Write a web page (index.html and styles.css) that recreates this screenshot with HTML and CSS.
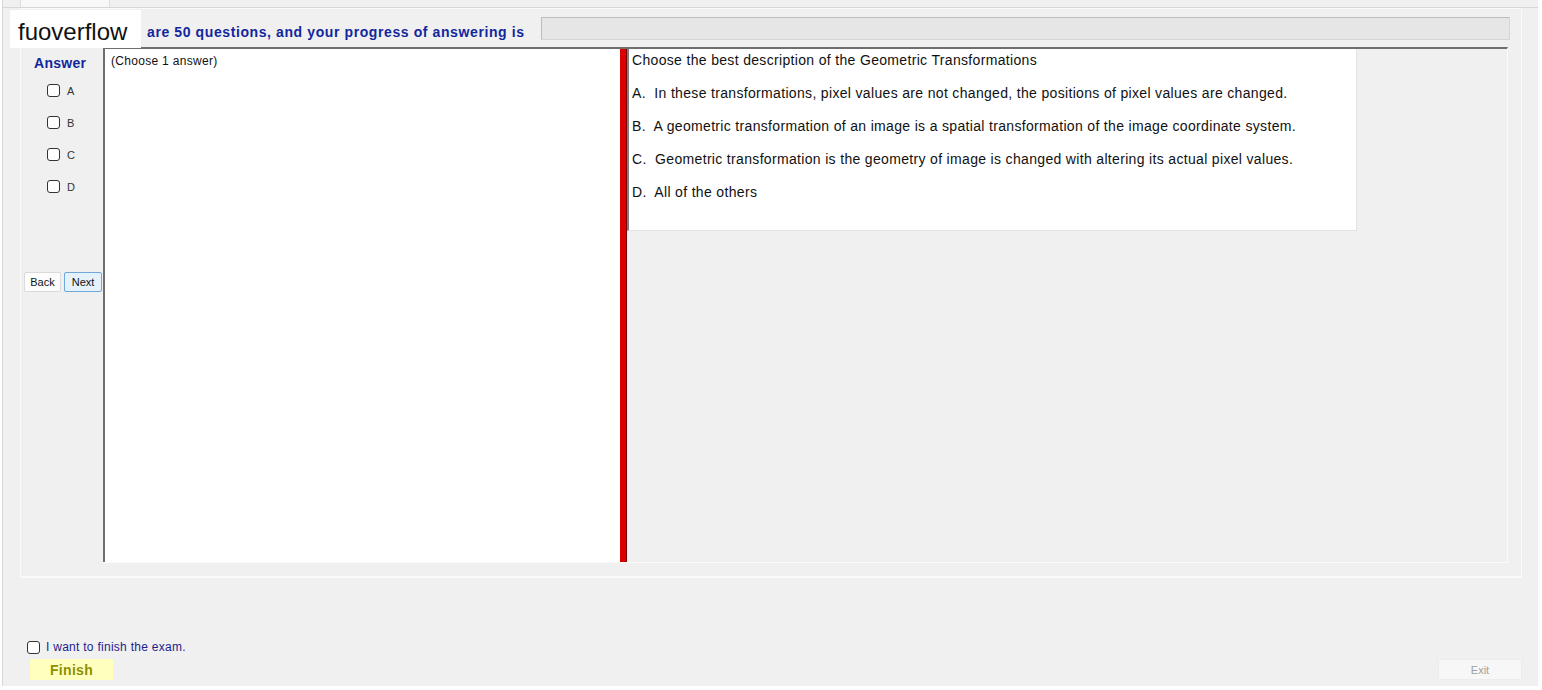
FILE: index.html
```html
<!DOCTYPE html>
<html lang="en">
<head>
  <meta charset="UTF-8">
  <title>Exam</title>
  <link rel="stylesheet" href="styles.css">
</head>
<body>
  <div class="window">
    <div class="tabs"><span class="tab"></span></div>
    <div class="page">
      <div class="group">
        <div class="header">
          <p class="progress-label">are 50 questions, and your progress of answering is</p>
          <div class="progress"></div>
        </div>
        <div class="main">
          <aside class="answers">
            <h2 class="answers-title">Answer</h2>
            <label class="option"><input type="checkbox"> A</label>
            <label class="option"><input type="checkbox"> B</label>
            <label class="option"><input type="checkbox"> C</label>
            <label class="option"><input type="checkbox"> D</label>
            <div class="nav">
              <button class="btn">Back</button>
              <button class="btn btn-active">Next</button>
            </div>
          </aside>
          <div class="exam">
            <div class="question-pane">(Choose 1 answer)</div>
            <div class="splitter"></div>
            <div class="content-pane">
              <div class="content">
                <p>Choose the best description of the Geometric Transformations</p>
                <p>A.&nbsp; In these transformations, pixel values are not changed, the positions of pixel values are changed.</p>
                <p>B.&nbsp; A geometric transformation of an image is a spatial transformation of the image coordinate system.</p>
                <p>C.&nbsp; Geometric transformation is the geometry of image is changed with altering its actual pixel values.</p>
                <p>D.&nbsp; All of the others</p>
              </div>
            </div>
          </div>
        </div>
      </div>
      <div class="footer">
        <div class="finish-box">
          <label class="finish-check"><input type="checkbox"> I want to finish the exam.</label>
          <button class="btn-finish">Finish</button>
        </div>
        <button class="btn-exit">Exit</button>
      </div>
    </div>
    <div class="brand">fuoverflow</div>
  </div>
</body>
</html>
```

FILE: styles.css
```css
body {
  margin: 0;
  background: #ffffff;
  font-family: "Liberation Sans", Arial, sans-serif;
  color: #111;
}

.window {
  position: relative;
  margin-left: 2px;
  width: 1535px;
  height: 686px;
  background: #f0f0f0;
  border-left: 1px solid #d8d8d8;
  border-right: 2px solid #fcfcfc;
}

.tabs {
  height: 7px;
}

.tab {
  display: block;
  margin-left: 17px;
  width: 90px;
  height: 7px;
  box-sizing: border-box;
  background: #f8f8f8;
  border: 1px solid #dcdcdc;
  border-top: none;
  border-bottom: none;
}

.page {
  border-top: 1px solid #d6d6d6;
}

.group {
  margin-left: 17px;
  width: 1502px;
  height: 570px;
  box-sizing: border-box;
  border: 1px solid #fafafa;
  border-bottom-width: 2px;
}

.header {
  display: flex;
  align-items: flex-start;
  height: 38px;
  padding-left: 126px;
}

.progress-label {
  margin: 15px 0 0;
  font-size: 14px;
  line-height: 16px;
  font-weight: bold;
  letter-spacing: 0.6px;
  color: #12279c;
  width: 394px;
}

.progress {
  margin-top: 8px;
  width: 969px;
  height: 23px;
  box-sizing: border-box;
  background: #e6e6e6;
  border: 1px solid #bdbdbd;
  border-right-color: #d6d6d6;
  border-bottom-color: #d6d6d6;
}

.main {
  display: flex;
}

.answers {
  width: 82px;
  display: flex;
  flex-direction: column;
}

.answers-title {
  margin: 8px 0 0 13px;
  font-size: 14px;
  line-height: 16px;
  letter-spacing: 0.3px;
  color: #12279c;
}

.option {
  display: flex;
  align-items: center;
  gap: 7px;
  height: 13px;
  margin: 19px 0 0 26px;
  font-size: 11px;
  color: #333;
}

.option:first-of-type {
  margin-top: 13px;
}

input[type="checkbox"] {
  appearance: none;
  margin: 0;
  width: 13px;
  height: 13px;
  box-sizing: border-box;
  border: 1px solid #333;
  border-radius: 3px;
  background: #fff;
}

.nav {
  display: flex;
  gap: 3px;
  margin: 79px 0 0 3px;
}

.btn {
  width: 37px;
  height: 20px;
  padding: 0;
  font-family: "Liberation Sans", Arial, sans-serif;
  font-size: 11px;
  color: #111;
  background: #fdfdfd;
  border: 1px solid #dadada;
  border-radius: 2px;
}

.btn-active {
  width: 38px;
  background: #e5f1fb;
  border-color: #6fa8dc;
}

.exam {
  display: flex;
  width: 1405px;
  height: 516px;
  box-sizing: border-box;
  border-top: 2px solid #6e6e6e;
  border-bottom: 1px solid #fbfbfb;
  border-right: 1px solid #fbfbfb;
}

.question-pane {
  width: 517px;
  box-sizing: border-box;
  background: #fff;
  border-left: 2px solid #6e6e6e;
  padding: 5px 6px;
  font-size: 12px;
  line-height: 14px;
  letter-spacing: 0.3px;
}

.splitter {
  width: 6px;
  background: #d80000;
  border-right: 1px solid #7a0000;
}

.content-pane {
  flex: 1;
  background: #f0f0f0;
}

.content {
  width: 730px;
  height: 182px;
  box-sizing: border-box;
  background: #fff;
  border-left: 2px solid #7d7d7d;
  border-right: 1px solid #e2e2e2;
  border-bottom: 1px solid #e2e2e2;
  padding: 3px 0 0 3px;
}

.content p {
  margin: 0 0 17px;
  font-size: 14px;
  line-height: 16px;
  letter-spacing: 0.33px;
  color: #111;
}

.footer {
  display: flex;
  justify-content: space-between;
  align-items: flex-end;
  height: 102px;
  padding: 0 16px 0 24px;
}

.finish-box {
  display: flex;
  flex-direction: column;
  align-items: flex-start;
}

.finish-check {
  display: flex;
  align-items: center;
  gap: 6px;
  font-size: 12px;
  letter-spacing: 0.27px;
  color: #1d1d8f;
}

.btn-finish {
  margin: 5px 0 0 3px;
  width: 83px;
  height: 21px;
  padding: 0;
  border: none;
  background: #ffffbe;
  font-family: "Liberation Sans", Arial, sans-serif;
  font-size: 14px;
  font-weight: bold;
  letter-spacing: 0.3px;
  color: #8f8f00;
}

.btn-exit {
  width: 84px;
  height: 21px;
  padding: 0;
  border: 1px solid #ececec;
  background: #f7f7f7;
  font-family: "Liberation Sans", Arial, sans-serif;
  font-size: 11px;
  color: #a0a0a0;
}

.brand {
  position: absolute;
  left: 7px;
  top: 10px;
  width: 131px;
  height: 38px;
  box-sizing: border-box;
  padding: 6px 0 0 8px;
  background: #fff;
  font-size: 24px;
  line-height: 32px;
  color: #111;
}
```
